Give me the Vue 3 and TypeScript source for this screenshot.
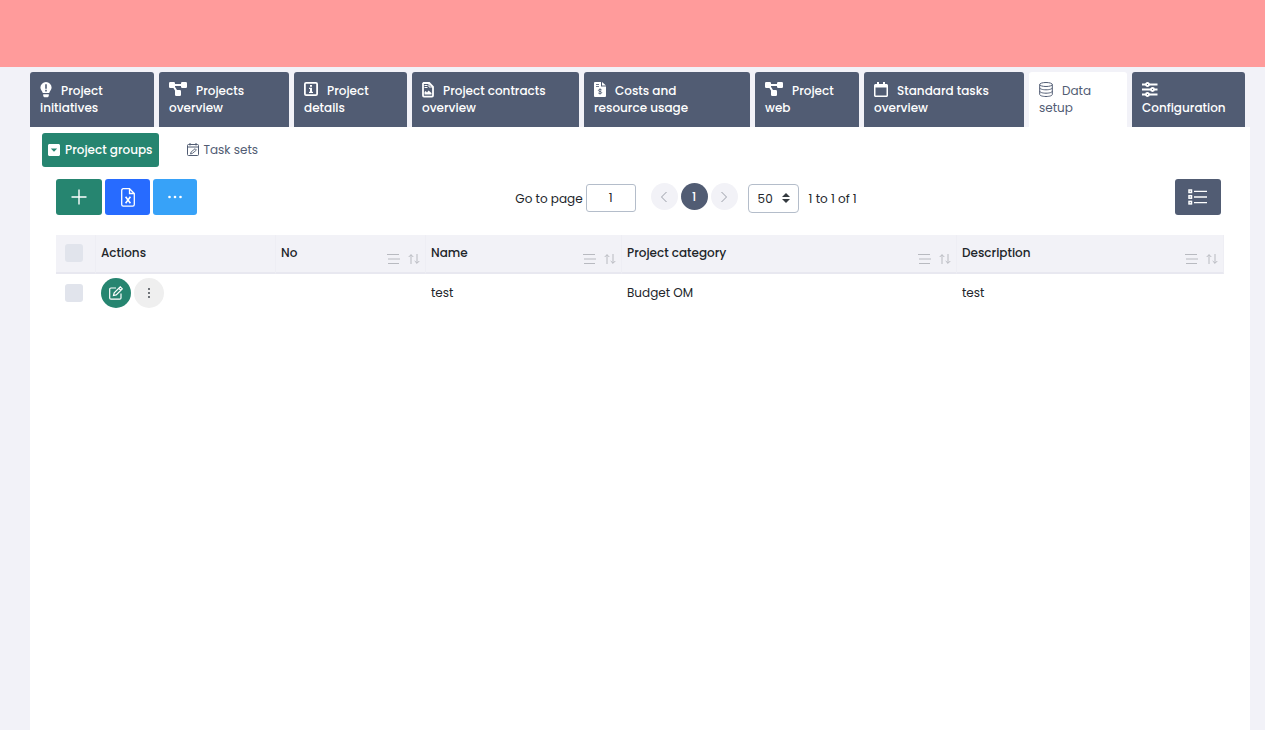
<script setup lang="ts">
import { ref } from 'vue'

interface Tab {
  icon: string
  lines: string[]
  grow: number
  active?: boolean
}

const tabs: Tab[] = [
  { icon: 'bulb', lines: ['Project', 'initiatives'], grow: 104 },
  { icon: 'diagram', lines: ['Projects', 'overview'], grow: 110 },
  { icon: 'info', lines: ['Project', 'details'], grow: 93 },
  { icon: 'contract', lines: ['Project contracts', 'overview'], grow: 147 },
  { icon: 'invoice', lines: ['Costs and', 'resource usage'], grow: 146 },
  { icon: 'diagram', lines: ['Project', 'web'], grow: 84 },
  { icon: 'calendar', lines: ['Standard tasks', 'overview'], grow: 140 },
  { icon: 'database', lines: ['Data', 'setup'], grow: 78, active: true },
  { icon: 'sliders', lines: ['', 'Configuration'], grow: 93 },
]

const columns = ['No', 'Name', 'Project category', 'Description']
const rows = [{ no: '', name: 'test', category: 'Budget OM', description: 'test' }]

const page = ref('1')
const pageSize = ref('50')
</script>

<template>
  <div class="app">
    <header class="banner"></header>
    <div class="shell">
      <nav class="tabs" aria-label="Modules">
        <a
          v-for="(tab, i) in tabs"
          :key="i"
          href="#"
          class="tab"
          :class="{ active: tab.active }"
          :style="{ flexGrow: tab.grow }"
        >
          <span class="tab-line">
            <svg v-if="tab.icon === 'bulb'" width="12" height="16" viewBox="0 0 12 16">
              <path fill="currentColor" fill-rule="evenodd" d="M6 0a5.600 5.600 0 0 0-5.600 5.600c0 2.400 1.700 3.300 2.400 5.400h6.400c.7-2.100 2.400-3 2.400-5.400A5.600 5.600 0 0 0 6 0zM5.200 2.300h1.600v4.500H5.200zM5.200 7.800h1.600v1.600H5.200z" />
              <path fill="currentColor" d="M3.200 12.300h5.600v1.200c0 1-.8 1.800-1.800 1.800H5c-1 0-1.800-.8-1.800-1.800z" />
            </svg>
            <svg v-else-if="tab.icon === 'diagram'" width="18" height="15" viewBox="0 0 18 15">
              <path d="M3 3h12M4 3.500l5 8" stroke="currentColor" stroke-width="2" />
              <rect x="0" y="0" width="6" height="6" rx="1.200" fill="currentColor" />
              <rect x="12" y="0" width="6" height="6" rx="1.200" fill="currentColor" />
              <rect x="6" y="8" width="6" height="6" rx="1.200" fill="currentColor" />
            </svg>
            <svg v-else-if="tab.icon === 'info'" width="14" height="14" viewBox="0 0 14 14">
              <rect x=".9" y=".9" width="12.200" height="12.200" rx="1.200" fill="none" stroke="currentColor" stroke-width="1.800" />
              <path d="M6 3h2v1.700H6zM5 5.800h3v3.900h1V11H5V9.700h1V7H5z" fill="currentColor" />
            </svg>
            <svg v-else-if="tab.icon === 'contract'" width="12" height="16" viewBox="0 0 12 16">
              <path d="M1.600 1h5.600L11 4.800v8.800a1 1 0 0 1-1 1H2a1 1 0 0 1-1-1V1.600z" fill="none" stroke="currentColor" stroke-width="1.800" />
              <path d="M7 1v4h4M2.500 3.500h3M2.500 5.500h3" fill="none" stroke="currentColor" />
              <path d="M2.500 12.500V10l1.200-1L5 10.500l1.500-2 3 2.500v1.500z" fill="currentColor" />
            </svg>
            <svg v-else-if="tab.icon === 'invoice'" width="12" height="16" viewBox="0 0 12 16">
              <path d="M1.200 0H7v4.500h5v9.300c0 .8-.5 1.200-1.200 1.200H1.200C.5 15 0 14.600 0 13.800V1.200C0 .5.500 0 1.200 0zM8 0l4 3.600H8z" fill="currentColor" />
              <path d="M2 2.500h3M2 4.500h3" stroke="#515c73" stroke-width=".8" />
              <path d="M7.700 8c-.8-.8-3.300-.9-3.300.5 0 1.300 3.300.7 3.300 2.100 0 1.300-2.500 1.300-3.400.4M6 6.400v6" fill="none" stroke="#515c73" stroke-width=".9" />
            </svg>
            <svg v-else-if="tab.icon === 'calendar'" width="14" height="15" viewBox="0 0 14 15">
              <path d="M3 0h2v2h4V0h2v2h1.500C13.300 2 14 2.700 14 3.500v10c0 .8-.7 1.500-1.500 1.500h-11C.7 15 0 14.300 0 13.500v-10C0 2.700.7 2 1.500 2H3zM1.500 5.500v8h11v-8z" fill="currentColor" fill-rule="evenodd" />
            </svg>
            <svg v-else-if="tab.icon === 'database'" width="14" height="16" viewBox="0 0 14 16">
              <g fill="none" stroke="currentColor">
                <ellipse cx="7" cy="2.500" rx="6.300" ry="2" />
                <path d="M.7 2.500v10c0 1.100 2.800 2 6.300 2s6.300-.9 6.300-2v-10M.7 5.800c0 1.100 2.800 2 6.300 2s6.300-.9 6.300-2M.7 9.200c0 1.100 2.800 2 6.300 2s6.300-.9 6.300-2" />
              </g>
            </svg>
            <svg v-else width="16" height="15" viewBox="0 0 16 15">
              <g fill="none" stroke="currentColor" stroke-width="1.800">
                <path d="M0 2.500h4M7 2.500h8.500M0 7.500h9M12 7.500h3.500M0 12.500h4M7 12.500h8.500" />
                <circle cx="5.500" cy="2.500" r="1.500" />
                <circle cx="10.500" cy="7.500" r="1.500" />
                <circle cx="5.500" cy="12.500" r="1.500" />
              </g>
            </svg>
            <span>{{ tab.lines[0] }}</span>
          </span>
          <span>{{ tab.lines[1] }}</span>
        </a>
      </nav>

      <main class="panel">
        <nav class="subtabs" aria-label="Data setup">
          <a href="#" class="subtab current">
            <svg width="12" height="12" viewBox="0 0 12 12">
              <path d="M1.500 0h9C11.300 0 12 .7 12 1.500v9c0 .8-.7 1.500-1.500 1.500h-9C.7 12 0 11.300 0 10.500v-9C0 .7.700 0 1.500 0zM2.800 4.500L6 7.700l3.200-3.200z" fill="currentColor" fill-rule="evenodd" />
            </svg>
            <span>Project groups</span>
          </a>
          <a href="#" class="subtab">
            <svg width="12" height="13" viewBox="0 0 12 13">
              <g fill="none" stroke="currentColor">
                <rect x=".5" y="1.500" width="11" height="11" rx="1" />
                <path d="M.5 4h11M3 0v2.500M9 0v2.500" />
                <path d="M3.500 11l.6-2 4-3.300 1.300 1.400-4 3.300z" stroke-width=".9" />
              </g>
            </svg>
            <span>Task sets</span>
          </a>
        </nav>

        <div class="toolbar">
          <div class="actions">
            <button type="button" class="btn add" aria-label="Add">
              <svg width="16" height="16" viewBox="0 0 16 16"><path d="M8 .5v15M.5 8h15" stroke="currentColor" stroke-width="1.400" /></svg>
            </button>
            <button type="button" class="btn export" aria-label="Export to Excel">
              <svg width="14" height="19" viewBox="0 0 14 19">
                <g fill="none" stroke="currentColor" stroke-width="1.300">
                  <path d="M2.200.7h6.300l4.800 4.800v11c0 .9-.7 1.700-1.600 1.700H2.300c-.9 0-1.600-.8-1.600-1.700v-14C.7 1.500 1.400.7 2.200.7zM8.500.7v4.800h4.800" />
                  <path d="M4.600 8.800l4.800 6.400M9.400 8.800l-4.800 6.400" stroke-width="1.600" />
                </g>
              </svg>
            </button>
            <button type="button" class="btn more" aria-label="More">
              <svg width="14" height="4" viewBox="0 0 14 4" fill="currentColor"><circle cx="1.500" cy="2" r="1.300" /><circle cx="7" cy="2" r="1.300" /><circle cx="12.500" cy="2" r="1.300" /></svg>
            </button>
          </div>

          <div class="pager">
            <label for="page">Go to page</label>
            <input id="page" v-model="page" class="page-input" type="text" />
            <div class="pages">
              <button type="button" class="round" aria-label="Previous page">
                <svg width="8" height="12" viewBox="0 0 8 12"><path d="M6.500 1l-5 5 5 5" fill="none" stroke="currentColor" /></svg>
              </button>
              <button type="button" class="round selected">1</button>
              <button type="button" class="round" aria-label="Next page">
                <svg width="8" height="12" viewBox="0 0 8 12"><path d="M1.500 1l5 5-5 5" fill="none" stroke="currentColor" /></svg>
              </button>
            </div>
            <div class="size">
              <select v-model="pageSize" aria-label="Rows per page">
                <option>50</option>
                <option>100</option>
              </select>
              <svg width="8" height="10" viewBox="0 0 8 10"><path d="M0 4l4-4 4 4zM0 6l4 4 4-4z" fill="#343a40" /></svg>
            </div>
            <span>1 to 1 of 1</span>
          </div>

          <button type="button" class="btn list" aria-label="Columns">
            <svg width="19" height="16" viewBox="0 0 19 16">
              <g fill="none" stroke="currentColor" stroke-width="1.500">
                <rect x="1" y="1" width="2.500" height="2.500" /><rect x="1" y="6.700" width="2.500" height="2.500" /><rect x="1" y="12.400" width="2.500" height="2.500" />
                <path d="M6 2.300h13M6 8h13M6 13.700h13" stroke-width="1.300" />
              </g>
            </svg>
          </button>
        </div>

        <table class="grid">
          <colgroup>
            <col class="c-check" /><col class="c-actions" /><col class="c-no" /><col class="c-name" /><col class="c-category" /><col />
          </colgroup>
          <thead>
            <tr>
              <th><input type="checkbox" aria-label="Select all" /></th>
              <th>Actions</th>
              <th v-for="column in columns" :key="column">
                <div class="head">
                  <span>{{ column }}</span>
                  <span class="tools">
                    <button type="button" aria-label="Filter">
                      <svg width="13" height="10" viewBox="0 0 13 10"><path d="M0 .5h12M1 5h12M1 9.500h11" stroke="currentColor" /></svg>
                    </button>
                    <button type="button" aria-label="Sort">
                      <svg width="12" height="10" viewBox="0 0 12 10"><path d="M3 10V.7M.7 3L3 .7 5.300 3M9 0v9.300M6.700 7L9 9.300 11.300 7" fill="none" stroke="currentColor" /></svg>
                    </button>
                  </span>
                </div>
              </th>
            </tr>
          </thead>
          <tbody>
            <tr v-for="(row, i) in rows" :key="i">
              <td><input type="checkbox" aria-label="Select row" /></td>
              <td>
                <div class="row-actions">
                  <button type="button" class="edit" aria-label="Edit">
                    <svg width="14" height="14" viewBox="0 0 14 14">
                      <g fill="none" stroke="currentColor" stroke-width="1.200">
                        <path d="M7 2H2C1.200 2 .7 2.500.7 3.200V12c0 .7.500 1.200 1.300 1.200h8.700c.8 0 1.300-.5 1.300-1.200V7.500" />
                        <path d="M4.500 9.500l.7-2.600L11.300.8l2 2-6.100 6.100zM9.800 2.300l2 2" />
                      </g>
                    </svg>
                  </button>
                  <button type="button" class="dots" aria-label="Row menu">
                    <svg width="4" height="12" viewBox="0 0 4 12" fill="currentColor"><circle cx="2" cy="2" r=".9" /><circle cx="2" cy="6" r=".9" /><circle cx="2" cy="10" r=".9" /></svg>
                  </button>
                </div>
              </td>
              <td>{{ row.no }}</td>
              <td>{{ row.name }}</td>
              <td>{{ row.category }}</td>
              <td>{{ row.description }}</td>
            </tr>
          </tbody>
        </table>
      </main>
    </div>
  </div>
</template>

<style>
body {
  margin: 0;
  background: #f2f2f8;
}
</style>

<style scoped>
.app {
  display: flex;
  flex-direction: column;
  min-height: 100vh;
  background: #f2f2f8;
  color: #212529;
  font-family: Poppins, Inter, sans-serif;
  font-size: 12px;
  line-height: 17px;
}
.app * {
  box-sizing: border-box;
}
button,
input,
select {
  font: inherit;
  margin: 0;
  padding: 0;
  border: 0;
}
button {
  display: flex;
  align-items: center;
  justify-content: center;
  cursor: pointer;
}
svg {
  display: block;
  flex: none;
}
a {
  text-decoration: none;
}
.banner {
  height: 67px;
  background: #ff9b9b;
}
.shell {
  flex: 1;
  display: flex;
  flex-direction: column;
  padding: 5px 15px 0 30px;
}
.tabs {
  display: flex;
  gap: 5px;
  padding-right: 5px;
}
.tab {
  flex: 1 1 0;
  min-width: 0;
  height: 55px;
  padding: 10px;
  display: flex;
  flex-direction: column;
  white-space: nowrap;
  border-radius: 3px 3px 0 0;
  background: #515c73;
  color: #fff;
  font-weight: 500;
}
.tab.active {
  background: #fff;
  color: #515c73;
  font-weight: 400;
}
.tab-line {
  display: flex;
  gap: 9px;
  height: 17px;
}
.panel {
  flex: 1;
  padding: 6px 26px 0;
  background: #fff;
}
.subtabs {
  display: flex;
  gap: 22px;
  margin-left: -14px;
}
.subtab {
  display: flex;
  align-items: center;
  gap: 5px;
  height: 34px;
  padding: 0 6px 1px;
  border-radius: 3px;
  color: #515c73;
}
.subtab.current {
  background: #268570;
  color: #fff;
  font-weight: 500;
}
.toolbar {
  display: flex;
  align-items: center;
  justify-content: space-between;
  height: 36px;
  margin: 12px 3px 20px 0;
}
.actions {
  display: flex;
  gap: 3px;
}
.btn {
  height: 36px;
  border-radius: 3px;
  color: #fff;
}
.add {
  width: 46px;
  background: #268570;
}
.export {
  width: 45px;
  background: #276bff;
}
.more {
  width: 44px;
  background: #37a2f8;
}
.list {
  width: 46px;
  background: #515c73;
}
.pager {
  display: flex;
  align-items: center;
  padding-top: 2px;
}
.page-input {
  width: 50px;
  height: 28px;
  margin: 0 15px 0 3px;
  border: 1px solid #b4bdca;
  border-radius: 3px;
  background: #fff;
  color: inherit;
  text-align: center;
}
.pages {
  display: flex;
  gap: 3px;
  padding-bottom: 3px;
}
.round {
  width: 27px;
  height: 27px;
  border-radius: 50%;
  background: #f2f2f7;
  color: #9a9ea8;
}
.round.selected {
  background: #515c73;
  color: #fff;
  font-weight: 500;
}
.size {
  position: relative;
  margin: 0 10px;
}
.size select {
  display: block;
  width: 51px;
  height: 29px;
  padding-left: 9px;
  appearance: none;
  border: 1px solid #b4bdca;
  border-radius: 4px;
  background: #fff;
  color: inherit;
}
.size svg {
  position: absolute;
  top: 9px;
  right: 9px;
  pointer-events: none;
}
.grid {
  width: 100%;
  table-layout: fixed;
  border-collapse: separate;
  border-spacing: 0;
}
.c-check {
  width: 40px;
}
.c-actions {
  width: 180px;
}
.c-no {
  width: 150px;
}
.c-name {
  width: 196px;
}
.c-category {
  width: 335px;
}
th,
td {
  height: 39px;
  padding: 0 5px 2px;
  text-align: left;
  vertical-align: middle;
}
th {
  border-right: 1px solid #eeeef4;
  border-bottom: 2px solid #e8e8f0;
  background: #f2f2f7;
  font-weight: 500;
}
th:first-child,
td:first-child {
  padding-left: 9px;
}
.head {
  display: flex;
  justify-content: space-between;
}
.tools {
  display: flex;
  align-items: flex-end;
  gap: 8px;
}
.tools button {
  background: none;
  color: #b8bac0;
}
.tools svg {
  margin-bottom: -3px;
}
input[type='checkbox'] {
  display: block;
  width: 18px;
  height: 18px;
  appearance: none;
  border-radius: 3px;
  background: #e1e4ec;
}
.row-actions {
  display: flex;
  gap: 3px;
}
.edit,
.dots {
  width: 30px;
  height: 30px;
  border-radius: 50%;
}
.edit {
  background: #268570;
  color: #fff;
}
.dots {
  background: #efefef;
  color: #343a40;
}
</style>
